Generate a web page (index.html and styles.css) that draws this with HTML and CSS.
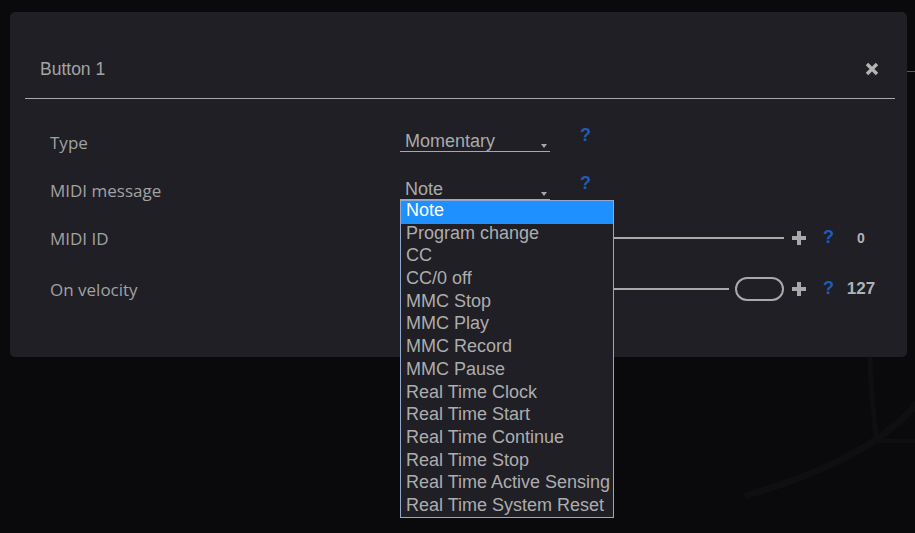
FILE: index.html
```html
<!DOCTYPE html>
<html>
<head>
<meta charset="utf-8">
<link rel="stylesheet" href="styles.css">
</head>
<body>
<svg class="bg-deco" width="200" height="220" viewBox="0 0 200 220">
  <path d="M30 183 C 80 168, 130 150, 170 120 C 190 105, 205 90, 215 70" fill="none" stroke="#0f0f12" stroke-width="7"/>
  <path d="M157 0 C 153 40, 155 80, 162 128" fill="none" stroke="#0f0f12" stroke-width="5"/>
  <path d="M160 128 L 215 128" fill="none" stroke="#0f0f12" stroke-width="4"/>
</svg>
<div class="edge-line"></div>
<div class="modal">
  <div class="modal-header">
    <span class="title">Button 1</span>
    <span class="close">
      <svg width="14" height="14" viewBox="0 0 14 14"><path d="M2 2 L12 12 M12 2 L2 12" stroke="#b4b4b4" stroke-width="3.4" stroke-linecap="butt"/></svg>
    </span>
  </div>
  <div class="modal-body">
    <div class="row">
      <div class="label">Type</div>
      <div class="select"><span>Momentary</span><i class="caret"></i></div>
      <span class="help">?</span>
    </div>
    <div class="row">
      <div class="label">MIDI message</div>
      <div class="select">
        <span>Note</span><i class="caret"></i>
        <ul class="dropdown">
          <li class="selected">Note</li>
          <li>Program change</li>
          <li>CC</li>
          <li>CC/0 off</li>
          <li>MMC Stop</li>
          <li>MMC Play</li>
          <li>MMC Record</li>
          <li>MMC Pause</li>
          <li>Real Time Clock</li>
          <li>Real Time Start</li>
          <li>Real Time Continue</li>
          <li>Real Time Stop</li>
          <li>Real Time Active Sensing</li>
          <li>Real Time System Reset</li>
        </ul>
      </div>
      <span class="help">?</span>
    </div>
    <div class="row">
      <div class="label">MIDI ID</div>
      <div class="slider"><span class="thumb"></span><span class="track"></span></div>
      <span class="plus"><svg width="14" height="14" viewBox="0 0 14 14"><path d="M5 0 H9 V5 H14 V9 H9 V14 H5 V9 H0 V5 H5 Z" fill="#a9a9a9"/></svg></span>
      <span class="help help-sm">?</span>
      <span class="value value-sm">0</span>
    </div>
    <div class="row row-last">
      <div class="label">On velocity</div>
      <div class="slider"><span class="track"></span><span class="thumb"></span></div>
      <span class="plus"><svg width="14" height="14" viewBox="0 0 14 14"><path d="M5 0 H9 V5 H14 V9 H9 V14 H5 V9 H0 V5 H5 Z" fill="#a9a9a9"/></svg></span>
      <span class="help help-sm">?</span>
      <span class="value">127</span>
    </div>
  </div>
</div>
</body>
</html>
```

FILE: styles.css
```css
html, body {
  margin: 0;
  padding: 0;
}
body {
  background: #0a0a0c;
  width: 915px;
  height: 533px;
  overflow: hidden;
  position: relative;
  font-family: "Liberation Sans", Arial, sans-serif;
}
.bg-deco {
  position: absolute;
  left: 715px;
  top: 313px;
}
.edge-line {
  position: absolute;
  left: 907px;
  top: 71px;
  width: 8px;
  height: 1px;
  background: #5a5a5e;
}
.modal {
  position: relative;
  margin: 12px 0 0 10px;
  width: 897px;
  height: 345px;
  background: #1f1f25;
  border-radius: 5px;
}
.modal-header {
  margin: 0 12px 0 15px;
  padding: 45px 16px 17px 15px;
  border-bottom: 1px solid #a8a8a8;
  display: flex;
  justify-content: space-between;
  align-items: center;
  height: 24px;
}
.title {
  font-size: 17.5px;
  line-height: 24px;
  color: #a4a4a4;
}
.close {
  display: flex;
  margin-top: -1px;
}
.modal-body {
  padding: 19px 0 0 40px;
}
.row {
  display: flex;
  align-items: center;
  height: 48px;
}
.row-last {
  margin-top: 3px;
}
.label {
  width: 350px;
  flex: none;
  font-family: "Open Sans", sans-serif;
  font-size: 17px;
  color: #a2a2a2;
}
.select {
  position: relative;
  width: 150px;
  height: 22px;
  box-sizing: content-box;
  border-bottom: 1px solid #a8a8a8;
  margin-bottom: 3px;
  display: flex;
  justify-content: space-between;
  align-items: flex-end;
  font-size: 18px;
  color: #aaaaaa;
}
.select > span {
  padding-left: 5px;
  line-height: 20px;
}
.caret {
  width: 0;
  height: 0;
  border-left: 3px solid transparent;
  border-right: 3px solid transparent;
  border-top: 4px solid #a8a8a8;
  margin: 0 3px 3px 0;
}
.help {
  align-self: flex-start;
  margin-top: 8px;
  margin-left: 30px;
  font-size: 18px;
  line-height: 1;
  font-weight: bold;
  color: #1d5cb8;
}
.help-sm {
  align-self: center;
  margin: 0 0 2px 17px;
}
.dropdown {
  position: absolute;
  top: calc(100% + 1px);
  left: 0;
  z-index: 5;
  margin: 0;
  padding: 0;
  list-style: none;
  width: 214px;
  height: 318px;
  box-sizing: border-box;
  overflow: hidden;
  border: 1px solid #93a8cf;
  background: #1f1f25;
}
.dropdown li {
  height: 22.69px;
  box-sizing: border-box;
  line-height: 18.5px;
  padding: 0 0 4.19px 5px;
  font-size: 18px;
  color: #adadad;
  white-space: nowrap;
}
.dropdown li.selected {
  background: #1e90ff;
  color: #ffffff;
}
.slider {
  width: 384px;
  display: flex;
  align-items: center;
  gap: 6px;
}
.track {
  flex: 1;
  height: 2px;
  background: #a9a9a9;
}
.thumb {
  width: 49px;
  height: 24px;
  box-sizing: border-box;
  border: 2px solid #a9a9a9;
  border-radius: 12px;
  flex: none;
}
.plus {
  display: flex;
  margin-left: 8px;
}
.value {
  width: 30px;
  margin-left: 12px;
  text-align: center;
  font-weight: bold;
  font-size: 17px;
  color: #b2b2b2;
}
.value-sm {
  font-size: 14px;
}
```
